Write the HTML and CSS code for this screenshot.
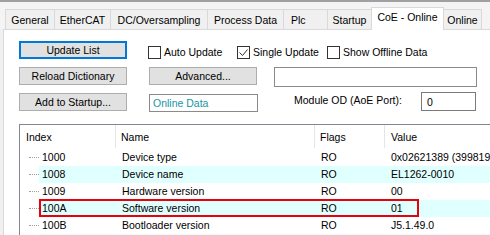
FILE: index.html
```html
<!DOCTYPE html>
<html>
<head>
<meta charset="utf-8">
<link rel="stylesheet" href="styles.css">
</head>
<body>
<div class="topline"></div>
<div class="tabs">
  <div class="tab t-general">General</div>
  <div class="tab t-ethercat">EtherCAT</div>
  <div class="tab t-dc">DC/Oversampling</div>
  <div class="tab t-pd">Process Data</div>
  <div class="tab t-plc">Plc</div>
  <div class="tab t-startup">Startup</div>
  <div class="tab t-coe selected">CoE - Online</div>
  <div class="tab t-online last">Online</div>
</div>
<div class="page">
  <div class="controls">
    <div class="row row-a">
      <div class="btn btn-default">Update List</div>
      <div class="chk chk-auto"><span class="box"></span><span class="chk-label">Auto Update</span></div>
      <div class="chk chk-single"><span class="box"><svg width="11" height="11" viewBox="0 0 11 11"><polyline points="1.5,5.5 4.5,8.5 9.5,2.5" fill="none" stroke="#333" stroke-width="1"/></svg></span><span class="chk-label">Single Update</span></div>
      <div class="chk chk-offline"><span class="box"></span><span class="chk-label">Show Offline Data</span></div>
    </div>
    <div class="row row-b">
      <div class="btn">Reload Dictionary</div>
      <div class="btn btn-adv">Advanced...</div>
      <div class="input input-wide"></div>
    </div>
    <div class="row row-c">
      <div class="btn btn-add">Add to Startup...</div>
      <div class="input input-online">Online Data</div>
      <div class="label-od">Module OD (AoE Port):</div>
      <div class="input input-port">0</div>
    </div>
  </div>
  <div class="list">
    <div class="list-head">
      <div class="hcell h-index">Index</div>
      <div class="hcell h-name">Name</div>
      <div class="hcell h-flags">Flags</div>
      <div class="hcell h-value">Value</div>
    </div>
    <div class="list-body">
      <div class="lrow"><div class="gutter"><span class="dots"></span></div><div class="cells"><div class="c-idx">1000</div><div class="c-name">Device type</div><div class="c-flags">RO</div><div class="c-value">0x02621389 (39981961)</div></div></div>
      <div class="lrow alt"><div class="gutter"><span class="dots"></span></div><div class="cells"><div class="c-idx">1008</div><div class="c-name">Device name</div><div class="c-flags">RO</div><div class="c-value">EL1262-0010</div></div></div>
      <div class="lrow"><div class="gutter"><span class="dots"></span></div><div class="cells"><div class="c-idx">1009</div><div class="c-name">Hardware version</div><div class="c-flags">RO</div><div class="c-value">00</div></div></div>
      <div class="lrow alt"><div class="gutter"><span class="dots"></span></div><div class="cells"><div class="c-idx">100A</div><div class="c-name">Software version</div><div class="c-flags">RO</div><div class="c-value">01</div></div></div>
      <div class="lrow"><div class="gutter"><span class="dots"></span></div><div class="cells"><div class="c-idx">100B</div><div class="c-name">Bootloader version</div><div class="c-flags">RO</div><div class="c-value">J5.1.49.0</div></div></div>
      <div class="lrow alt"><div class="gutter"></div><div class="cells"></div></div>
      <div class="highlight"></div>
    </div>
  </div>
</div>
</body>
</html>
```
FILE: styles.css
```css
html, body {
  margin: 0;
  padding: 0;
}
body {
  width: 490px;
  height: 235px;
  overflow: hidden;
  background: #f0f0f0;
  font-family: "Liberation Sans", Arial, sans-serif;
  font-size: 10.5px;
  color: #000;
}
.topline {
  height: 2px;
  background: #a0a0a0;
}
.tabs {
  display: flex;
  align-items: flex-end;
  height: 27px;
  padding-left: 5px;
  background: #f4f4f4;
  position: relative;
  z-index: 2;
}
.tab {
  box-sizing: border-box;
  height: 20px;
  line-height: 18px;
  padding-top: 1px;
  text-align: center;
  background: #f0f0f0;
  border: 1px solid #d9d9d9;
  border-right: none;
  border-bottom: none;
  white-space: nowrap;
}
.tab.last { border-right: 1px solid #d9d9d9; }
.t-general { width: 49px; }
.t-ethercat { width: 56px; }
.t-dc { width: 97px; }
.t-pd { width: 76px; }
.t-plc { width: 44px; text-align: left; padding-left: 7px; }
.t-startup { width: 44px; }
.t-coe { width: 73px; }
.t-online { width: 38px; }
.tab.selected {
  height: 23px;
  margin-bottom: -1px;
  background: #fff;
  border-right: 1px solid #d9d9d9;
  line-height: 19px;
  padding-top: 0;
}
.tab.selected + .tab { border-left: none; }
.page {
  margin-left: 3px;
  border-left: 1px solid #d9d9d9;
  border-top: 1px solid #d9d9d9;
  background: #fff;
  height: 205px;
  overflow: hidden;
}
.controls {
  padding: 11px 0 0 15px;
}
.row {
  display: flex;
  align-items: flex-start;
}
.row-b { margin-top: 8px; }
.row-c { margin-top: 5px; }
.btn {
  box-sizing: border-box;
  width: 108px;
  height: 18px;
  line-height: 16px;
  text-align: center;
  background: #e1e1e1;
  border: 1px solid #adadad;
  white-space: nowrap;
}
.btn-default {
  border: 2px solid #0078d7;
  line-height: 14px;
}
.btn-adv { margin-left: 22px; }
.btn-add { margin-top: 1px; }
.chk {
  display: flex;
  align-items: center;
  margin-top: 5px;
  height: 13px;
}
.chk-auto { margin-left: 21px; width: 89px; }
.chk-single { width: 90px; }
.box {
  box-sizing: border-box;
  width: 13px;
  height: 13px;
  border: 1px solid #333;
  background: #fff;
  display: flex;
}
.chk-label {
  margin-left: 3px;
  white-space: nowrap;
  line-height: 13px;
}
.input {
  box-sizing: border-box;
  background: #fff;
  border: 1px solid #7a7a7a;
  padding-left: 3px;
  white-space: nowrap;
}
.input-wide {
  margin-left: 17px;
  width: 203px;
  height: 20px;
  border-color: #8a8a8a;
}
.input-online {
  margin-left: 22px;
  margin-top: 2px;
  width: 109px;
  height: 18px;
  line-height: 16px;
  color: #1796a3;
  border-color: #8a8a8a;
}
.label-od {
  margin-left: 36px;
  width: 127px;
  line-height: 17px;
  white-space: nowrap;
}
.input-port {
  width: 55px;
  height: 19px;
  line-height: 18px;
  padding-left: 5px;
}
.list {
  margin: 12px 0 0 15px;
  width: 480px;
  border-top: 1px solid #828790;
  border-left: 1px solid #828790;
  background: #fff;
}
.list-head {
  display: flex;
  height: 24px;
  line-height: 24px;
}
.hcell {
  box-sizing: border-box;
  white-space: nowrap;
  border-right: 1px solid #e5e5e5;
  margin: 0 0 1px 0;
}
.h-index { width: 96px; padding-left: 6px; }
.h-name { width: 199px; padding-left: 5px; }
.h-flags { width: 70px; padding-left: 5px; }
.h-value { flex: 1; padding-left: 6px; border-right: none; }
.list-body {
  position: relative;
}
.lrow {
  display: flex;
  height: 17px;
  line-height: 17px;
}
.gutter {
  width: 19px;
  display: flex;
  align-items: center;
}
.dots {
  margin-left: 9px;
  width: 10px;
  border-top: 1px dotted #a0a0a0;
}
.cells {
  flex: 1;
  display: flex;
  white-space: nowrap;
}
.lrow.alt .cells { background: #e0ffff; }
.c-idx { width: 77px; padding-left: 3px; box-sizing: border-box; }
.c-name { width: 199px; padding-left: 6px; box-sizing: border-box; }
.c-flags { width: 70px; padding-left: 6px; box-sizing: border-box; }
.c-value { flex: 1; padding-left: 6px; }
.highlight {
  position: absolute;
  left: 19px;
  top: 50px;
  width: 380px;
  height: 18px;
  box-sizing: border-box;
  border: 2px solid #e8000b;
}
```
